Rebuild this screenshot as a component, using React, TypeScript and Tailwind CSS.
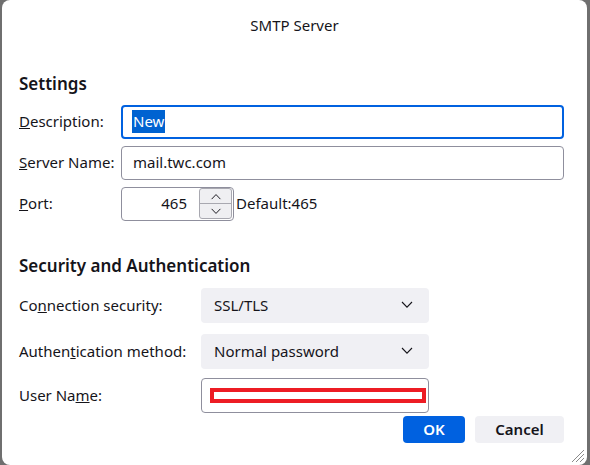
import { ReactNode } from 'react'

const font = { fontFamily: '"Noto Sans", "Open Sans", Arial, sans-serif' }

function Chevron({ up = false, className = '' }: { up?: boolean; className?: string }) {
  return (
    <svg viewBox="0 0 12 8" className={className} fill="none" stroke="currentColor" strokeWidth="1.1">
      {up ? <path d="M1 7 L6 1.8 L11 7" /> : <path d="M1 1 L6 6.2 L11 1" />}
    </svg>
  )
}

function Label({ children }: { children: ReactNode }) {
  return <div className="text-[15px] text-[#15141a] leading-none">{children}</div>
}

function SelectBox({ value }: { value: string }) {
  return (
    <div className="flex h-[35px] w-[228px] items-center justify-between rounded-[4px] bg-[#f0f0f4] pl-[13px] pr-[16px] text-[15px] text-[#15141a]">
      <span>{value}</span>
      <Chevron className="h-[8px] w-[12px] text-[#15141a]" />
    </div>
  )
}

export default function App() {
  return (
    <div className="h-[465px] w-[590px] bg-[#6f6f6f] pl-[2px] pr-[3px]" style={font}>
      <div className="relative h-full w-full rounded-lg bg-white">
        <div className="pt-[14px] text-center text-[15px] text-[#15141a]">SMTP Server</div>

        <div className="pl-[17px] pr-[23px]">
          <div className="mt-[37px] text-[17px] font-semibold text-[#15141a] leading-[20px]">Settings</div>

          <div className="mt-[11px] grid grid-cols-[102px_1fr] items-center gap-y-[7px]">
            <Label>
              <u>D</u>escription:
            </Label>
            <div className="flex h-[34px] items-center rounded-[4px] border-2 border-[#0061e0] px-[9px] text-[15px]">
              <span className="bg-[#0063d1] px-[1px] text-white">New</span>
            </div>

            <Label>
              <u>S</u>erver Name:
            </Label>
            <div className="flex h-[34px] items-center rounded-[4px] border border-[#8f8f9d] px-[11px] text-[15px] text-[#15141a]">
              mail.twc.com
            </div>

            <Label>
              <u>P</u>ort:
            </Label>
            <div className="flex items-center">
              <div className="flex h-[34px] w-[113px] items-center rounded-[4px] border border-[#8f8f9d] pr-[1px]">
                <span className="flex-1 pr-[12px] text-right text-[15px] text-[#15141a]">465</span>
                <div className="flex h-[31px] w-[33px] flex-col rounded-[3px] border border-[#a8a8b0] bg-[#efeff2]">
                  <div className="flex flex-1 items-center justify-center border-b border-[#a8a8b0]">
                    <Chevron up className="h-[7px] w-[12px] text-[#15141a]" />
                  </div>
                  <div className="flex flex-1 items-center justify-center">
                    <Chevron className="h-[7px] w-[12px] text-[#15141a]" />
                  </div>
                </div>
              </div>
              <span className="ml-[2px] text-[15px] text-[#15141a]">Default:465</span>
            </div>
          </div>

          <div className="mt-[35px] text-[17px] font-semibold text-[#15141a] leading-[20px]">
            Security and Authentication
          </div>

          <div className="mt-[12px] grid grid-cols-[182px_auto_1fr] items-center gap-y-[11px]">
            <Label>
              Co<u>n</u>nection security:
            </Label>
            <SelectBox value="SSL/TLS" />
            <div />

            <Label>
              Authen<u>t</u>ication method:
            </Label>
            <SelectBox value="Normal password" />
            <div />
          </div>

          <div className="mt-[9px] grid grid-cols-[182px_auto_1fr] items-center">
            <Label>
              User Na<u>m</u>e:
            </Label>
            <div className="flex h-[35px] w-[228px] items-center rounded-[4px] border border-[#8f8f9d] pl-[8px]">
              <div className="h-[15px] w-[216px] border-[4px] border-[#ed1c24]" />
            </div>
            <div />
          </div>

          <div className="mt-[3px] flex justify-end gap-[10px]">
            <button className="h-[27px] w-[62px] rounded-[4px] bg-[#0061e0] text-[15px] font-semibold text-white">
              OK
            </button>
            <button className="h-[27px] w-[89px] rounded-[4px] bg-[#f0f0f4] text-[15px] font-semibold text-[#15141a]">
              Cancel
            </button>
          </div>
        </div>

        <svg className="absolute bottom-[2px] right-[2px] h-[16px] w-[16px]" viewBox="0 0 16 16" stroke="#8a8a8a" strokeWidth="1">
          <path d="M15 3 L3 15 M15 7 L7 15 M15 11 L11 15" />
        </svg>
      </div>
    </div>
  )
}
